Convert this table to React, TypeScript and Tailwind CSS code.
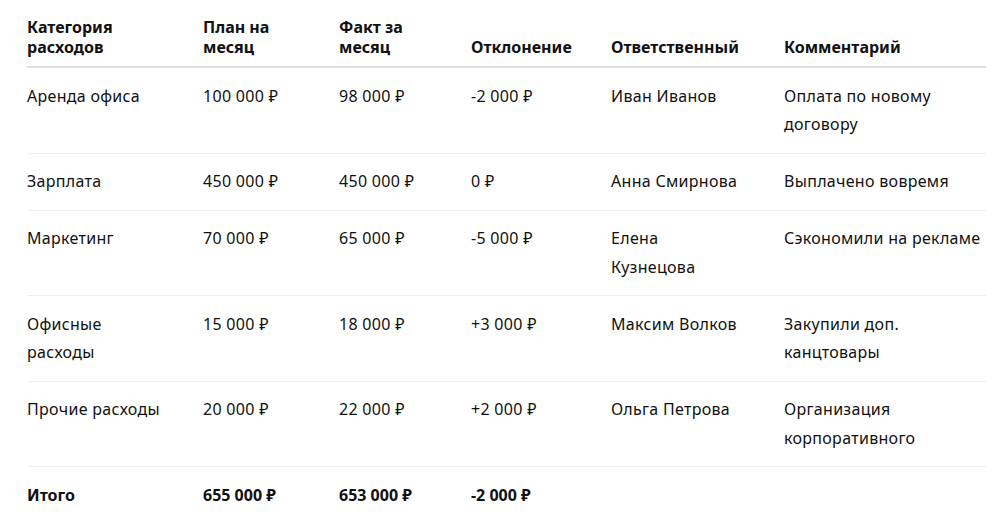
import React from "react";

type Row = {
  cat: React.ReactNode;
  plan: string;
  fact: string;
  dev: string;
  who: React.ReactNode;
  note: React.ReactNode;
};

const rows: Row[] = [
  {
    cat: "Аренда офиса",
    plan: "100 000 ₽",
    fact: "98 000 ₽",
    dev: "-2 000 ₽",
    who: "Иван Иванов",
    note: (
      <>
        Оплата по новому
        <br />
        договору
      </>
    ),
  },
  {
    cat: "Зарплата",
    plan: "450 000 ₽",
    fact: "450 000 ₽",
    dev: "0 ₽",
    who: "Анна Смирнова",
    note: "Выплачено вовремя",
  },
  {
    cat: "Маркетинг",
    plan: "70 000 ₽",
    fact: "65 000 ₽",
    dev: "-5 000 ₽",
    who: (
      <>
        Елена
        <br />
        Кузнецова
      </>
    ),
    note: "Сэкономили на рекламе",
  },
  {
    cat: (
      <>
        Офисные
        <br />
        расходы
      </>
    ),
    plan: "15 000 ₽",
    fact: "18 000 ₽",
    dev: "+3 000 ₽",
    who: "Максим Волков",
    note: (
      <>
        Закупили доп.
        <br />
        канцтовары
      </>
    ),
  },
  {
    cat: "Прочие расходы",
    plan: "20 000 ₽",
    fact: "22 000 ₽",
    dev: "+2 000 ₽",
    who: "Ольга Петрова",
    note: (
      <>
        Организация
        <br />
        корпоративного
      </>
    ),
  },
];

const td = "py-[13.75px] pr-2 align-top whitespace-nowrap tracking-[0.3px]";
const tdb = "py-[13.75px] pr-2 align-top whitespace-nowrap";
const th = "pt-[17px] pb-[9px] pr-2 align-bottom text-left font-bold whitespace-nowrap leading-[20px]";

export default function App() {
  return (
    <div
      className="w-[1005px] h-[532px] overflow-hidden bg-white pl-[27px] pr-[19px] text-[#111] text-[16px]"
      style={{ fontFamily: '"Noto Sans", "Open Sans", Arial, sans-serif' }}
    >
      <table className="w-[959px] table-fixed border-collapse leading-[28.5px]">
        <colgroup>
          <col className="w-[176px]" />
          <col className="w-[136px]" />
          <col className="w-[132px]" />
          <col className="w-[140px]" />
          <col className="w-[173px]" />
          <col className="w-[202px]" />
        </colgroup>
        <thead>
          <tr className="border-b-2 border-[#dedede]">
            <th className={th}>
              Категория
              <br />
              расходов
            </th>
            <th className={th}>
              План на
              <br />
              месяц
            </th>
            <th className={th}>
              Факт за
              <br />
              месяц
            </th>
            <th className={th}>Отклонение</th>
            <th className={th}>Ответственный</th>
            <th className={th}>Комментарий</th>
          </tr>
        </thead>
        <tbody>
          {rows.map((r, i) => (
            <tr key={i} className="border-b border-[#efefef]">
              <td className={td}>{r.cat}</td>
              <td className={td}>{r.plan}</td>
              <td className={td}>{r.fact}</td>
              <td className={td}>{r.dev}</td>
              <td className={td}>{r.who}</td>
              <td className={td}>{r.note}</td>
            </tr>
          ))}
          <tr className="font-bold">
            <td className={tdb}>Итого</td>
            <td className={tdb}>655 000 ₽</td>
            <td className={tdb}>653 000 ₽</td>
            <td className={tdb}>-2 000 ₽</td>
            <td className={tdb}></td>
            <td className={tdb}></td>
          </tr>
        </tbody>
      </table>
    </div>
  );
}
